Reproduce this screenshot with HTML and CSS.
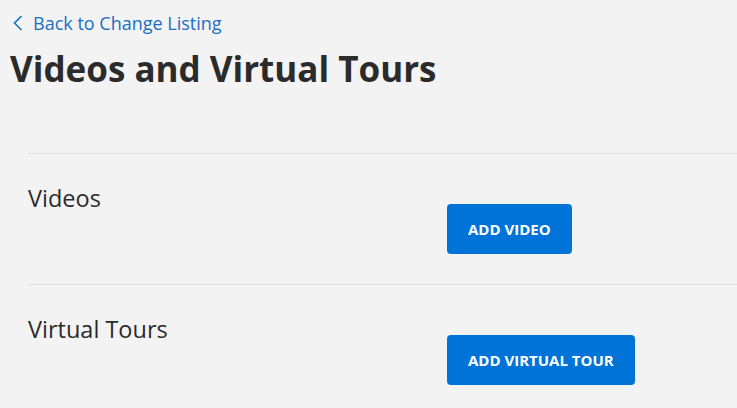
FILE: index.html
```html
<!DOCTYPE html>
<html lang="en">
<head>
<meta charset="utf-8">
<title>Videos and Virtual Tours</title>
<link rel="stylesheet" href="styles.css">
</head>
<body>
<div class="page">
  <a class="back-link" href="#">
    <svg class="back-icon" width="12" height="18" viewBox="0 0 12 18" aria-hidden="true"><path d="M9.5 2 L2.5 9 L9.5 16" fill="none" stroke="currentColor" stroke-width="1.6"/></svg>
    <span>Back to Change Listing</span>
  </a>
  <h1 class="page-title">Videos and Virtual Tours</h1>
  <div class="sections">
    <section class="media-row">
      <h2 class="media-label">Videos</h2>
      <div class="media-action"><button class="btn-primary" type="button">ADD VIDEO</button></div>
    </section>
    <section class="media-row">
      <h2 class="media-label">Virtual Tours</h2>
      <div class="media-action"><button class="btn-primary" type="button">ADD VIRTUAL TOUR</button></div>
    </section>
  </div>
</div>
</body>
</html>
```
FILE: styles.css
```css
html, body {
  margin: 0;
  padding: 0;
  background: #f3f3f3;
}
body {
  font-family: "Open Sans", "Liberation Sans", sans-serif;
  color: #2b2b2b;
}
.page {
  padding: 11px 0 0 10px;
}
.back-link {
  display: flex;
  align-items: center;
  gap: 9px;
  color: #1a6fc4;
  text-decoration: none;
  font-size: 18px;
  line-height: 24px;
  padding-left: 2px;
}
.back-icon {
  display: block;
}
.page-title {
  margin: 12px 0 0 0;
  font-size: 35px;
  line-height: 44px;
  font-weight: 700;
  color: #2b2b2b;
}
.sections {
  margin: 62px 0 0 18px;
}
.media-row {
  display: flex;
  border-top: 1px solid #dcdcdc;
  padding: 29px 0 30px 0;
}
.media-label {
  width: 419px;
  margin: 0;
  font-size: 23.5px;
  font-weight: 400;
  line-height: 30px;
  color: #2b2b2b;
}
.media-action {
  padding-top: 21px;
}
.btn-primary {
  display: block;
  background: #0073d9;
  color: #fff;
  border: none;
  border-radius: 4px;
  height: 50px;
  padding: 0 21px;
  font-family: "Open Sans", "Liberation Sans", sans-serif;
  font-size: 15px;
  font-weight: 700;
  cursor: pointer;
}
```
